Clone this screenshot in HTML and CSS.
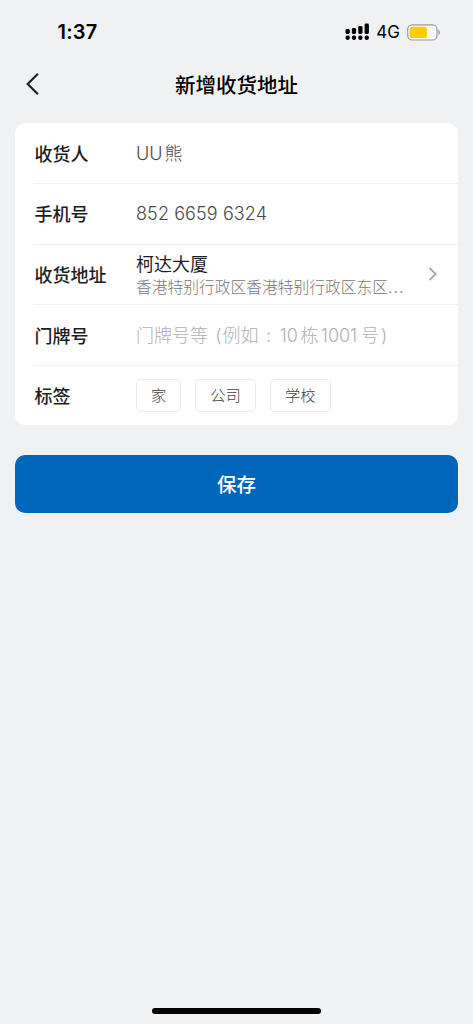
FILE: index.html
```
<!DOCTYPE html>
<html lang="zh-CN">
<head>
<meta charset="utf-8">
<meta name="viewport" content="width=device-width, initial-scale=1">
<title>新增收货地址</title>
<link rel="stylesheet" href="styles.css">
</head>
<body>
<div class="screen">
  <div class="status">
    <span class="time">1:37</span>
    <div class="status-right">
      <svg class="signal" width="25" height="18" viewBox="0 0 25 18">
        <rect x="0.5" y="6" width="4.3" height="5" rx="1.4"/><rect x="6.8" y="5" width="4.3" height="6" rx="1.4"/><rect x="13.2" y="3" width="4.3" height="8" rx="1.4"/><rect x="19.6" y="0.5" width="4.3" height="10.5" rx="1.4"/>
        <rect x="0.5" y="12.6" width="4.3" height="4.3" rx="1.8"/><rect x="6.8" y="12.6" width="4.3" height="4.3" rx="1.8"/><rect x="13.2" y="12.6" width="4.3" height="4.3" rx="1.8"/><rect x="19.6" y="12.6" width="4.3" height="4.3" rx="1.8"/>
      </svg>
      <span class="network">4G</span>
      <svg class="battery" width="34" height="17" viewBox="0 0 34 17">
        <rect x="0.7" y="0.8" width="29.3" height="15.2" rx="4.6" fill="#f8f8fa" stroke="#9b9ca0" stroke-width="1.2"/>
        <rect x="2.6" y="2.7" width="17.4" height="11.4" rx="2.6" fill="#fc0"/>
        <path d="M31.5 5.8v5.2c1.8-.9 1.8-4.3 0-5.2z" fill="#8f9094"/>
      </svg>
    </div>
  </div>
  <header class="nav">
    <svg class="back" width="16" height="24" viewBox="0 0 16 24"><path d="M12.9 1.8 2.7 12l10.2 10.2"/></svg>
    <h1 class="title">新增收货地址</h1>
  </header>
  <main class="card">
    <div class="row"><span class="label">收货人</span><span class="value name">UU<span class="cjk">熊</span></span></div>
    <div class="row"><span class="label">手机号</span><span class="value phone">852 6659 6324</span></div>
    <div class="row">
      <span class="label">收货地址</span>
      <div class="address"><span class="place">柯达大厦</span><span class="region">香港特别行政区香港特别行政区东区<span class="dots">...</span></span></div>
      <svg class="chevron" width="10" height="16" viewBox="0 0 10 16"><path d="m1.5 2 6.2 6-6.2 6"/></svg>
    </div>
    <div class="row"><span class="label">门牌号</span><span class="value hint">门牌号等<span class="open">(</span>例如<span class="colon">:</span><span class="num">10</span>栋<span class="num long">1001</span>号<span class="close">)</span></span></div>
    <div class="row"><span class="label">标签</span><div class="tags"><span class="tag">家</span><span class="tag">公司</span><span class="tag">学校</span></div></div>
  </main>
  <button class="save">保存</button>
  <div class="home"></div>
</div>
</body>
</html>
```
FILE: styles.css
```
* { box-sizing: border-box; }
body {
  margin: 0;
  background: #f0f1f3;
  font-family: Inter, "Noto Sans CJK SC", sans-serif;
  color: #1d1d1f;
}
.screen {
  height: 1024px;
  padding: 0 15px;
  display: flex;
  flex-direction: column;
  overflow: hidden;
}
.status {
  height: 56px;
  padding: 8px 17px 0 42.5px;
  display: flex;
  justify-content: space-between;
  align-items: center;
}
.time { font-size: 20px; line-height: 24px; font-weight: 600; color: #000; letter-spacing: 0.2px; }
.status-right { display: flex; align-items: center; }
.signal { fill: #000; }
.network { margin-left: 6px; font-size: 17px; font-weight: 400; line-height: 20px; color: #000; }
.battery { margin-left: 7px; }
.nav {
  height: 66.5px;
  padding: 0 10px 10.5px 10px;
  display: grid;
  grid-template-columns: 16px 1fr 16px;
  align-items: center;
}
.back { fill: none; stroke: #222; stroke-width: 2.2; }
.title {
  margin: 0;
  padding-top: 3px;
  text-align: center;
  font-size: 20.5px;
  line-height: 28px;
  font-weight: 500;
  color: #000;
}
.card {
  background: #fff;
  border-radius: 10px;
  padding-left: 18px;
}
.row {
  height: 60.6px;
  padding: 4px 0 0 1.5px;
  display: flex;
  align-items: center;
  box-shadow: 0 1px #f0f1f2;
}
.row:last-child { box-shadow: none; }
.label { width: 101.5px; font-size: 18px; line-height: 26px; font-weight: 500; flex: none; }
.value { margin-top: -2px; font-size: 18px; line-height: 26px; color: #484848; white-space: nowrap; font-weight: 300; }
.phone { letter-spacing: 0.1px; }
.cjk { margin-left: 2px; }
.address { width: 280px; display: flex; flex-direction: column; }
.place { font-size: 18px; line-height: 23px; }
.region { font-size: 15.75px; line-height: 23px; color: #777; white-space: nowrap; font-weight: 300; }
.dots { letter-spacing: 1px; }
.chevron { margin: -4px 0 0 12px; fill: none; stroke: #a5a6a8; stroke-width: 1.8; }
.hint { color: #b0b0b0; }
.open, .colon, .num { display: inline-block; text-align: center; }
.open { width: 14.5px; text-align: right; padding-right: 1px; }
.colon { width: 20px; }
.num { width: 20.5px; margin-right: 1.5px; }
.long { width: 41px; }
.close { padding-left: 2px; }
.tags { display: flex; gap: 14px; margin-top: -4px; }
.tag {
  height: 33px;
  padding: 0 14px;
  border: 1px solid #e9eaec;
  border-radius: 5px;
  font-size: 15.3px;
  line-height: 32px;
  color: #404040;
  font-weight: 300;
}
.save {
  height: 58px;
  margin: 29.5px 0 0;
  padding: 2px 0 0;
  border: 0;
  border-radius: 10px;
  background: #0066ba;
  color: #fff;
  font: 500 19.5px/28px Inter, "Noto Sans CJK SC", sans-serif;
}
.home {
  width: 169px;
  height: 6px;
  margin: auto auto 10px;
  border-radius: 3px;
  background: #000;
}
```
